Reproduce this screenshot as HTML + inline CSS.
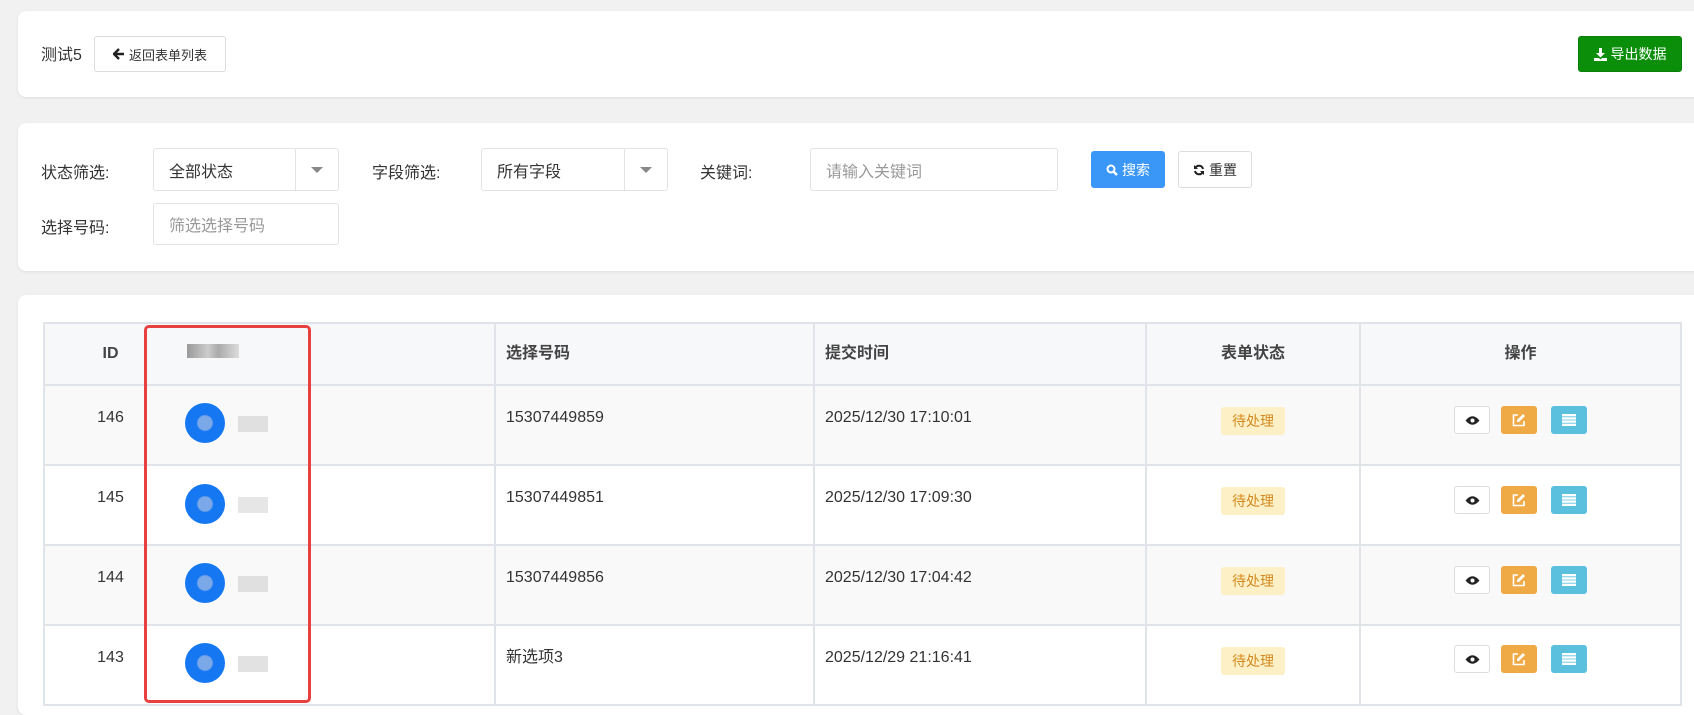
<!DOCTYPE html>
<html><head><meta charset="utf-8"><style>
*{box-sizing:border-box;margin:0;padding:0}
body{width:1694px;height:704px;overflow:hidden;background:#f1f1f1;font-family:"Liberation Sans","Noto Sans CJK SC",sans-serif;color:#333;position:relative}
.abs{position:absolute}
.card{position:absolute;background:#fff;border-radius:8px;box-shadow:0 1px 3px rgba(0,0,0,.08)}
.btn{position:absolute;border:1px solid #ddd;border-radius:3px;background:#fff;font-size:13px;display:flex;align-items:center;justify-content:center;gap:4px}
.lbl{position:absolute;font-size:16px;color:#333}
.inp{position:absolute;border:1px solid #e3e3e3;border-radius:3px;background:#fff;font-size:16px;display:flex;align-items:center;padding-left:15px}
.ph{color:#999}
table{position:absolute;left:43px;top:322px;width:1639px;border-collapse:collapse;font-size:16px;table-layout:fixed}
td,th{border:2px solid #e0e3e7;text-align:left;vertical-align:top;line-height:20px}
th{background:#f7f8fa;height:62px;vertical-align:middle;font-weight:bold;color:#444}
td{height:80px;padding-top:22px}
tr.g td{background:#f9f9f9}
.c2{border-left-style:hidden}
.badge{display:inline-block;background:#fdf0c6;color:#d4891c;font-size:14px;padding:4px 11px;border-radius:3px;margin-top:-1px}
.ab{display:inline-block;width:36px;height:28px;border-radius:3px;vertical-align:top;position:absolute}
</style></head><body>
<div class="card" style="left:18px;top:11px;width:1690px;height:86px"></div>
<div class="abs" style="left:41px;top:41px;font-size:16px">测试5</div>
<div class="btn" style="left:94px;top:36px;width:132px;height:36px"><svg width="12" height="12" viewBox="0 0 12 12"><path d="M6 1L1 6l5 5M1.5 6H11" stroke="#222" stroke-width="2.4" fill="none"/></svg>返回表单列表</div>
<div class="btn" style="left:1578px;top:36px;width:104px;height:36px;background:#0b8f0b;border-color:#0a7f0a;color:#fff;font-size:14px"><svg width="13" height="13" viewBox="0 0 13 13"><path d="M5 0h3v5h3L6.5 9.5 2 5h3z M0 10h5l1.5 1.5L8 10h5v3H0z" fill="#fff"/></svg>导出数据</div>

<div class="card" style="left:18px;top:123px;width:1690px;height:148px"></div>
<div class="lbl" style="left:41px;top:159px">状态筛选:</div>
<div class="inp" style="left:153px;top:148px;width:186px;height:43px">全部状态<span style="position:absolute;left:141px;top:0;bottom:0;border-left:1px solid #e3e3e3;width:44px"></span><span style="position:absolute;right:15px;top:18px;border:6px solid transparent;border-top:6px solid #888;border-bottom:0"></span></div>
<div class="lbl" style="left:372px;top:159px">字段筛选:</div>
<div class="inp" style="left:481px;top:148px;width:187px;height:43px">所有字段<span style="position:absolute;left:142px;top:0;bottom:0;border-left:1px solid #e3e3e3;width:44px"></span><span style="position:absolute;right:15px;top:18px;border:6px solid transparent;border-top:6px solid #888;border-bottom:0"></span></div>
<div class="lbl" style="left:700px;top:159px">关键词:</div>
<div class="inp ph" style="left:810px;top:148px;width:248px;height:43px">请输入关键词</div>
<div class="btn" style="left:1091px;top:151px;width:74px;height:37px;background:#3a97f7;border-color:#3a97f7;color:#fff;font-size:14px"><svg width="12" height="12" viewBox="0 0 12 12"><circle cx="5" cy="5" r="3.5" stroke="#fff" stroke-width="2" fill="none"/><path d="M7.5 7.5L11 11" stroke="#fff" stroke-width="2.4"/></svg>搜索</div>
<div class="btn" style="left:1178px;top:151px;width:74px;height:37px;font-size:14px"><svg width="12" height="12" viewBox="0 0 12 12"><path d="M10 5A4.2 4.2 0 0 0 2.4 3.6M2 7a4.2 4.2 0 0 0 7.6 1.4" stroke="#222" stroke-width="2" fill="none"/><path d="M1 1v4h4zM11 11V7H7z" fill="#222"/></svg>重置</div>
<div class="lbl" style="left:41px;top:214px">选择号码:</div>
<div class="inp ph" style="left:153px;top:203px;width:186px;height:42px">筛选选择号码</div>

<div class="card" style="left:18px;top:295px;width:1690px;height:420px"></div>
<table>
<colgroup><col style="width:132px"><col style="width:319px"><col style="width:319px"><col style="width:332px"><col style="width:214px"><col></colgroup>
<tr><th style="text-align:center">ID</th><th class="c2" style="padding-left:143px"><span style="display:inline-block;width:52px;height:14px;margin-left:-132px;background:linear-gradient(90deg,#999,#ccc 40%,#aaa 60%,#ddd)"></span></th><th style="padding-left:10px">选择号码</th><th style="padding-left:10px">提交时间</th><th style="text-align:center">表单状态</th><th style="text-align:center">操作</th></tr>
<tr class="g"><td style="text-align:center">146</td><td class="c2"></td><td style="padding-left:10px">15307449859</td><td style="padding-left:10px">2025/12/30 17:10:01</td><td style="text-align:center"><span class="badge">待处理</span></td><td></td></tr>
<tr><td style="text-align:center">145</td><td class="c2"></td><td style="padding-left:10px">15307449851</td><td style="padding-left:10px">2025/12/30 17:09:30</td><td style="text-align:center"><span class="badge">待处理</span></td><td></td></tr>
<tr class="g"><td style="text-align:center">144</td><td class="c2"></td><td style="padding-left:10px">15307449856</td><td style="padding-left:10px">2025/12/30 17:04:42</td><td style="text-align:center"><span class="badge">待处理</span></td><td></td></tr>
<tr><td style="text-align:center">143</td><td class="c2"></td><td style="padding-left:10px">新选项3</td><td style="padding-left:10px">2025/12/29 21:16:41</td><td style="text-align:center"><span class="badge">待处理</span></td><td></td></tr>
</table>
<div class="abs" style="left:185px;top:403px;width:40px;height:40px;border-radius:50%;background:radial-gradient(circle,#7aa8e8 0 25%,#1677f2 30%,#1677f2 70%,#9cc6f7 100%)"></div>
<div class="abs" style="left:238px;top:416px;width:30px;height:16px;background:#e0e0e0"></div>
<div class="abs" style="left:185px;top:484px;width:40px;height:40px;border-radius:50%;background:radial-gradient(circle,#7aa8e8 0 25%,#1677f2 30%,#1677f2 70%,#9cc6f7 100%)"></div>
<div class="abs" style="left:238px;top:497px;width:30px;height:16px;background:#e6e6e6"></div>
<div class="abs" style="left:185px;top:563px;width:40px;height:40px;border-radius:50%;background:radial-gradient(circle,#7aa8e8 0 25%,#1677f2 30%,#1677f2 70%,#9cc6f7 100%)"></div>
<div class="abs" style="left:238px;top:576px;width:30px;height:16px;background:#e0e0e0"></div>
<div class="abs" style="left:185px;top:643px;width:40px;height:40px;border-radius:50%;background:radial-gradient(circle,#7aa8e8 0 25%,#1677f2 30%,#1677f2 70%,#9cc6f7 100%)"></div>
<div class="abs" style="left:238px;top:656px;width:30px;height:16px;background:#e2e2e2"></div>
<div class="abs" style="left:144px;top:325px;width:167px;height:378px;border:3px solid #e8403f;border-radius:5px"></div>

<div class="abs" style="left:1454px;top:406px"><span class="ab" style="border:1px solid #ddd;background:#fff;left:0"><svg style="position:absolute;left:10px;top:8px" width="15" height="11" viewBox="0 0 15 11"><path d="M0.5 5.5Q7.5-3 14.5 5.5Q7.5 14 0.5 5.5z" fill="#222"/><circle cx="7.5" cy="5.5" r="2" fill="#fff"/></svg></span><span class="ab" style="background:#efa945;left:47px"><svg style="position:absolute;left:11px;top:7px" width="14" height="14" viewBox="0 0 14 14"><path d="M6 2H1.5v10.5H12V8" stroke="#fff" stroke-width="1.6" fill="none"/><path d="M11 1l2 2-6 6H5V7z" fill="#fff"/></svg></span><span class="ab" style="background:#5bc0de;left:97px"><svg style="position:absolute;left:11px;top:8px" width="14" height="12" viewBox="0 0 14 12"><path d="M0 0h14v2.4H0zM0 3.2h14v2.4H0zM0 6.4h14v2.4H0zM0 9.6h14V12H0z" fill="#fff"/></svg></span></div>
<div class="abs" style="left:1454px;top:486px"><span class="ab" style="border:1px solid #ddd;background:#fff;left:0"><svg style="position:absolute;left:10px;top:8px" width="15" height="11" viewBox="0 0 15 11"><path d="M0.5 5.5Q7.5-3 14.5 5.5Q7.5 14 0.5 5.5z" fill="#222"/><circle cx="7.5" cy="5.5" r="2" fill="#fff"/></svg></span><span class="ab" style="background:#efa945;left:47px"><svg style="position:absolute;left:11px;top:7px" width="14" height="14" viewBox="0 0 14 14"><path d="M6 2H1.5v10.5H12V8" stroke="#fff" stroke-width="1.6" fill="none"/><path d="M11 1l2 2-6 6H5V7z" fill="#fff"/></svg></span><span class="ab" style="background:#5bc0de;left:97px"><svg style="position:absolute;left:11px;top:8px" width="14" height="12" viewBox="0 0 14 12"><path d="M0 0h14v2.4H0zM0 3.2h14v2.4H0zM0 6.4h14v2.4H0zM0 9.6h14V12H0z" fill="#fff"/></svg></span></div>
<div class="abs" style="left:1454px;top:566px"><span class="ab" style="border:1px solid #ddd;background:#fff;left:0"><svg style="position:absolute;left:10px;top:8px" width="15" height="11" viewBox="0 0 15 11"><path d="M0.5 5.5Q7.5-3 14.5 5.5Q7.5 14 0.5 5.5z" fill="#222"/><circle cx="7.5" cy="5.5" r="2" fill="#fff"/></svg></span><span class="ab" style="background:#efa945;left:47px"><svg style="position:absolute;left:11px;top:7px" width="14" height="14" viewBox="0 0 14 14"><path d="M6 2H1.5v10.5H12V8" stroke="#fff" stroke-width="1.6" fill="none"/><path d="M11 1l2 2-6 6H5V7z" fill="#fff"/></svg></span><span class="ab" style="background:#5bc0de;left:97px"><svg style="position:absolute;left:11px;top:8px" width="14" height="12" viewBox="0 0 14 12"><path d="M0 0h14v2.4H0zM0 3.2h14v2.4H0zM0 6.4h14v2.4H0zM0 9.6h14V12H0z" fill="#fff"/></svg></span></div>
<div class="abs" style="left:1454px;top:645px"><span class="ab" style="border:1px solid #ddd;background:#fff;left:0"><svg style="position:absolute;left:10px;top:8px" width="15" height="11" viewBox="0 0 15 11"><path d="M0.5 5.5Q7.5-3 14.5 5.5Q7.5 14 0.5 5.5z" fill="#222"/><circle cx="7.5" cy="5.5" r="2" fill="#fff"/></svg></span><span class="ab" style="background:#efa945;left:47px"><svg style="position:absolute;left:11px;top:7px" width="14" height="14" viewBox="0 0 14 14"><path d="M6 2H1.5v10.5H12V8" stroke="#fff" stroke-width="1.6" fill="none"/><path d="M11 1l2 2-6 6H5V7z" fill="#fff"/></svg></span><span class="ab" style="background:#5bc0de;left:97px"><svg style="position:absolute;left:11px;top:8px" width="14" height="12" viewBox="0 0 14 12"><path d="M0 0h14v2.4H0zM0 3.2h14v2.4H0zM0 6.4h14v2.4H0zM0 9.6h14V12H0z" fill="#fff"/></svg></span></div>
</body></html>
